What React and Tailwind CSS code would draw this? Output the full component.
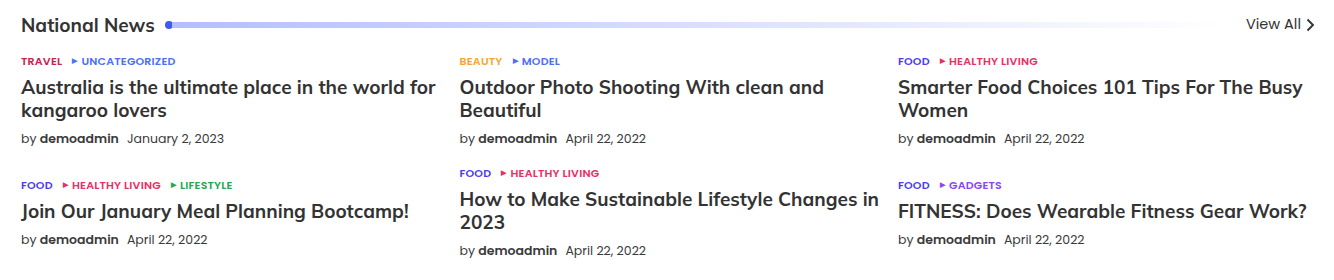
import React from "react";

const colors = {
  TRAVEL: "text-[#c8234f]",
  UNCATEGORIZED: "text-[#4d6ef5]",
  BEAUTY: "text-[#f7a531]",
  MODEL: "text-[#4d6ef5]",
  FOOD: "text-[#4b3cf0]",
  "HEALTHY LIVING": "text-[#ea2f64]",
  LIFESTYLE: "text-[#22a84f]",
  GADGETS: "text-[#8a45f5]",
};

const posts = [
  { cats: ["TRAVEL", "UNCATEGORIZED"], title: "Australia is the ultimate place in the world for kangaroo lovers", date: "January 2, 2023" },
  { cats: ["BEAUTY", "MODEL"], title: "Outdoor Photo Shooting With clean and Beautiful", date: "April 22, 2022" },
  { cats: ["FOOD", "HEALTHY LIVING"], title: "Smarter Food Choices 101 Tips For The Busy Women", date: "April 22, 2022" },
  { cats: ["FOOD", "HEALTHY LIVING", "LIFESTYLE"], title: "Join Our January Meal Planning Bootcamp!", date: "April 22, 2022" },
  { cats: ["FOOD", "HEALTHY LIVING"], title: "How to Make Sustainable Lifestyle Changes in 2023", date: "April 22, 2022" },
  { cats: ["FOOD", "GADGETS"], title: "FITNESS: Does Wearable Fitness Gear Work?", date: "April 22, 2022" },
];

function Post({ p }) {
  return (
    <div className="flex flex-col">
      <div className="flex items-center text-[11px] font-semibold leading-4 tracking-[0.2px] font-['Poppins','Open_Sans',sans-serif]">
        {p.cats.map((c, i) => (
          <React.Fragment key={c}>
            {i > 0 && <span className={`${colors[c]} text-[7px] ml-[10px] mr-[4px]`}>▶</span>}
            <span className={colors[c]}>{c}</span>
          </React.Fragment>
        ))}
      </div>
      <h3 className="mt-[7px] text-[19px] leading-[23px] font-bold text-[#333333] font-['Mulish','Lato',sans-serif]">
        {p.title}
      </h3>
      <div className="mt-[7px] text-[12.5px] leading-5 text-[#3a3a3a] font-['Poppins','Open_Sans',sans-serif]">
        by <span className="font-semibold">demoadmin</span>
        <span className="ml-[8px]">{p.date}</span>
      </div>
    </div>
  );
}

export default function App() {
  return (
    <div className="w-[1334px] h-[280px] bg-white px-[21px] pt-[14px] overflow-hidden">
      <div className="flex items-center h-[22px]">
        <h2 className="text-[19px] font-bold text-[#333333] font-['Mulish','Lato',sans-serif] leading-[22px]">National News</h2>
        <div className="flex items-center ml-[10px] w-[1057px]">
          <div className="w-[8px] h-[8px] rounded-full bg-[#3d5af1] shrink-0" />
          <div className="flex-1 h-[6px] -ml-[1px] bg-gradient-to-r from-[#b4befd] to-white" />
        </div>
        <div className="ml-auto flex items-center text-[14.5px] text-[#333333] font-['Poppins','Open_Sans',sans-serif]">
          View All
          <svg width="10" height="14" viewBox="0 0 10 14" className="ml-[4px] -mr-[2px]" fill="none" stroke="#333" strokeWidth="1.9">
            <path d="M2.5 1.5 L8 7 L2.5 12.5" />
          </svg>
        </div>
      </div>
      <div className="grid grid-cols-[repeat(3,420px)] gap-x-[18.5px] gap-y-[16px] items-center mt-[17px]">
        {posts.map((p, i) => (
          <Post key={i} p={p} />
        ))}
      </div>
    </div>
  );
}
